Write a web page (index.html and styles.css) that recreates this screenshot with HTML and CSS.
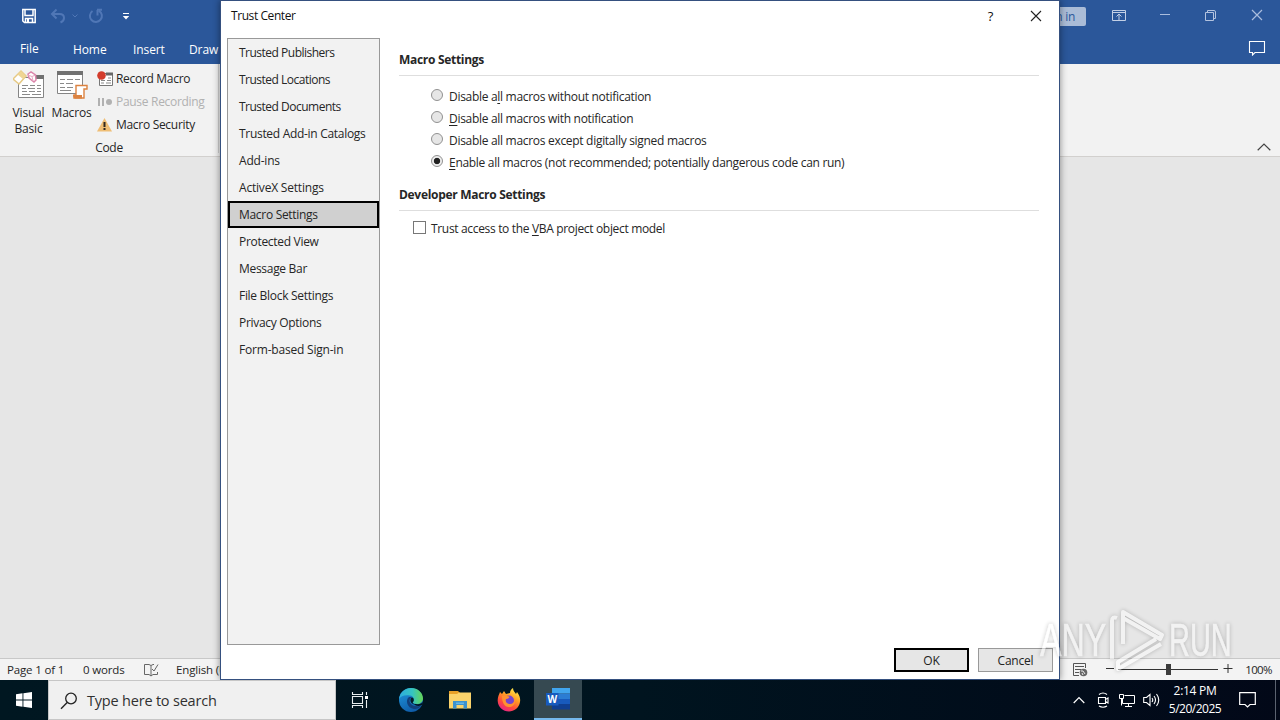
FILE: index.html
```html
<!DOCTYPE html>
<html lang="en">
<head>
    <meta charset="UTF-8">
    <meta name="viewport" content="width=device-width, initial-scale=1.0">
    <title>Trust Center</title>
    <link rel="stylesheet" href="styles.css">
</head>
<body>
    <div class="desktop">
        <div class="word">
            <header class="titlebar">
                <div class="quick-access">
                    <svg class="qa-save" width="16" height="16" viewBox="0 0 16 16"><path d="M1.8 1.5H14.2V14.5H3.5L1.8 13Z M4 2V7.5H12V2 M4.5 14V10.5H11.5V14" fill="none" stroke="#fff" stroke-width="1.5"/><path d="M6 11h2v3H6z" fill="#fff"/></svg>
                    <svg class="qa-undo" width="16" height="16" viewBox="0 0 16 16"><path d="M6.5 1.5L2 6L6.5 10.5 M2.5 6H9.5Q14 6 14 10Q14 13 10.5 14.5" fill="none" stroke="#5077b6" stroke-width="2"/></svg>
                    <svg class="qa-drop" width="6" height="4" viewBox="0 0 6 4"><path d="M.5 .5L3 3L5.5 .5" fill="none" stroke="#5077b6"/></svg>
                    <svg class="qa-redo" width="16" height="16" viewBox="0 0 16 16"><path d="M4.5 3A6 6 0 1 0 11 2.8 M9 1.8H14 M9.5 2V7.5" fill="none" stroke="#5077b6" stroke-width="2"/></svg>
                    <svg class="qa-more" width="8" height="7" viewBox="0 0 8 7"><path d="M1 .5H7" stroke="#fff"/><path d="M.8 3H7.2L4 6.5Z" fill="#fff"/></svg>
                </div>
                <div class="window-controls">
                    <span class="sign-in">Sign in</span>
                    <svg class="wc-ribbon" width="14" height="12" viewBox="0 0 14 12"><path d="M.5 .5H13.5V10.5H.5Z M.5 2.5H13.5 M7 10V4.5 M4.5 6.5L7 4L9.5 6.5" fill="none" stroke="#c3d0e6"/></svg>
                    <svg class="wc-min" width="10" height="10" viewBox="0 0 10 10"><path d="M0 3.5H10" stroke="#aabddd"/></svg>
                    <svg class="wc-max" width="11" height="11" viewBox="0 0 11 11"><path d="M.5 2.5H8.5V10.5H.5Z M2.5 2V.5H9Q10.5 .5 10.5 2V8.5H9" fill="none" stroke="#b3c3df"/></svg>
                    <svg class="wc-close" width="12" height="12" viewBox="0 0 12 12"><path d="M1 1L11 11M11 1L1 11" stroke="#aabddd" stroke-width="1.2"/></svg>
                </div>
            </header>
            <nav class="tabs">
                <span class="tab tab-file">File</span>
                <span class="tab tab-home">Home</span>
                <span class="tab tab-insert">Insert</span>
                <span class="tab tab-draw">Draw</span>
                <svg class="comment" width="18" height="16" viewBox="0 0 18 16"><path d="M1.5 1.5H16.5V12.5H7L4.5 15V12.5H1.5Z" fill="none" stroke="#fff" stroke-width="1.1"/></svg>
            </nav>
            <section class="ribbon">
                <div class="group">
                    <div class="group-tools">
                        <div class="tool tool-vb">
                            <svg width="32" height="32" viewBox="0 0 32 32">
                                <path d="M5.5 8.5H30.5V28.5H5.5Z" fill="#fff" stroke="#858585"/>
                                <path d="M20 6H31V10H20Z" fill="#717171"/>
                                <path d="M9 16.5H15M17 16.5H22M24 16.5H28M9 19.5H13M15 19.5H22M24 19.5H28M9 22.5H14M16 22.5H22M24 22.5H28M9 25.5H17M19 25.5H28" stroke="#8a8a8a"/>
                                <path d="M0 10L8 2L13 7L6 15Z" fill="#fff" stroke="#e6c983" stroke-width="1.5"/>
                                <path d="M8 2L13 7L10 10L4.5 5.5Z" fill="#efd594"/>
                                <path d="M15 5L18 3L22.5 6L23 11L21 13L16 9Z" fill="#fff" stroke="#dc85ab" stroke-width="1.5"/>
                                <path d="M15 6L19 7.5L22.5 6M19 7.5L20 12" stroke="#e8a8c3" fill="none"/>
                            </svg>
                            <span>Visual<br>Basic</span>
                        </div>
                        <div class="tool tool-macros">
                            <svg width="32" height="32" viewBox="0 0 32 32">
                                <path d="M1.5 2.5H26.5V24.5H1.5Z" fill="#fff" stroke="#858585"/>
                                <path d="M1 2H27V6H1Z" fill="#717171"/>
                                <path d="M4 10.5H9M11 10.5H17M19 10.5H24M4 14.5H8M10 14.5H17M4 18.5H9M11 18.5H17M4 21.5H15" stroke="#8a8a8a"/>
                                <path d="M20 16.5H31V20H28V29H18V26H20Z" fill="#fff" stroke="#dc8240" stroke-width="1.4"/>
                                <path d="M17 26H26V29.5H19Q17 29 17 26Z" fill="#dc8240"/>
                            </svg>
                            <span>Macros</span>
                        </div>
                        <div class="commands">
                            <div class="command">
                                <svg width="17" height="16" viewBox="0 0 17 16"><path d="M2.5 2.5H15.5V14.5H2.5Z" fill="#fff" stroke="#777"/><path d="M9 1.5H16V4.5H9Z" fill="#666"/><path d="M4 9.5H8M10 9.5H14M4 12H7M9 12H14M11 7H14" stroke="#888"/><circle cx="4.5" cy="4.5" r="4.3" fill="#d33c2c"/></svg>
                                <span>Record Macro</span>
                            </div>
                            <div class="command disabled">
                                <svg width="17" height="16" viewBox="0 0 17 16"><path d="M2 4V12M6 4V12" stroke="#b1b1b1" stroke-width="2"/><circle cx="12" cy="8" r="3" fill="#b1b1b1"/></svg>
                                <span>Pause Recording</span>
                            </div>
                            <div class="command">
                                <svg width="17" height="16" viewBox="0 0 17 16"><path d="M7.5 1L15 14.5H0Z" fill="#efbe75"/><path d="M7.5 5V10M7.5 11V13" stroke="#302820" stroke-width="2"/></svg>
                                <span>Macro Security</span>
                            </div>
                        </div>
                    </div>
                    <div class="group-name">Code</div>
                </div>
                <svg class="collapse" width="14" height="8" viewBox="0 0 14 8"><path d="M.7 7.2L7 1L13.3 7.2" fill="none" stroke="#444" stroke-width="1.2"/></svg>
            </section>
            <main class="canvas"></main>
            <footer class="statusbar">
                <span class="pages">Page 1 of 1</span>
                <span class="words">0 words</span>
                <svg class="proof" width="15" height="14" viewBox="0 0 15 14"><path d="M7 2.5L5 1.5H.5V11.5H5L7 13L9 11.5H13.5V9M7 2.5V13M7 2.5L9 1.5H10M8 6L10 8L14 1.5" fill="none" stroke="#666"/></svg>
                <span class="language">English (United States)</span>
                <div class="zoom">
                    <svg class="web-layout" width="15" height="14" viewBox="0 0 15 14"><path d="M12.5 5V.5H.5V12.5H6M2 3.5H11M2 6.5H8M2 9.5H6" fill="none" stroke="#555"/><circle cx="10.5" cy="9.5" r="3.8" fill="#666"/><path d="M8 8L10 8L12 11M10 12L9 10" stroke="#eee" fill="none"/></svg>
                    <svg class="slider" width="128" height="14" viewBox="0 0 128 14"><path d="M1 5.5H9M118.5 5.5H127.5M123 1V10M13 6.5H113" stroke="#333" fill="none"/><path d="M61 1H66V12H61Z" fill="#3c3c3c"/></svg>
                    <span class="percent">100%</span>
                </div>
            </footer>
        </div>

        <footer class="taskbar">
            <div class="start">
                <svg width="16" height="16" viewBox="0 0 16 16"><path d="M0 2.3L6.5 1.3V7.5H0ZM7.4 1.2L16 0V7.5H7.4ZM0 8.4H6.5V14.7L0 13.7ZM7.4 8.4H16V16L7.4 14.8Z" fill="#fff"/></svg>
            </div>
            <div class="search">
                <svg width="18" height="18" viewBox="0 0 18 18"><circle cx="11" cy="6.5" r="5.3" fill="none" stroke="#222" stroke-width="1.3"/><path d="M7.2 10.5L1 16.7" stroke="#222" stroke-width="1.4"/></svg>
                <span>Type here to search</span>
            </div>
            <div class="task">
                <svg width="18" height="18" viewBox="0 0 18 18"><path d="M1.5 1V3.5H11.5V1M1.5 17V14.5H11.5V17M1.5 5.5H11.5V12.5H1.5ZM15.5 1V4M15.5 9V17" fill="none" stroke="#e8eef0" stroke-width="1.1"/><path d="M14 5H17V8H14Z" fill="#fff"/></svg>
            </div>
            <div class="task task-edge">
                <svg width="24" height="24" viewBox="0 0 24 24">
                    <defs>
                        <linearGradient id="edgeTop" x1="0" x2="1"><stop offset="0" stop-color="#2dacdf"/><stop offset=".55" stop-color="#35c4c2"/><stop offset="1" stop-color="#66d654"/></linearGradient>
                        <linearGradient id="edgeBody" x1="0" y1="0" x2=".5" y2="1"><stop offset="0" stop-color="#2099df"/><stop offset="1" stop-color="#0f5da9"/></linearGradient>
                    </defs>
                    <circle cx="12" cy="12" r="12" fill="url(#edgeBody)"/>
                    <path d="M0 11C1 4 6 0 12 0C19 0 24 5 24 10.5C24 14 21 16 18 16C15 16 13.5 15 14 14C15.5 12 15 8 11 7.5C6 6.5 1.5 8 0 11Z" fill="url(#edgeTop)"/>
                    <path d="M10 9C6 12 8 20 15 21C18 21.5 21 19.5 22.5 17C20 19 14 18.5 12 16C10 13.5 10 11 13 9Z" fill="#123f7a"/>
                    <path d="M12 10C14 8 16 12 14 14C13 15.5 15 16 17 16C14 17.5 10 14 12 10Z" fill="#051a25"/>
                    <path d="M24 13.5C23 16 20 16.5 17 16L15 16C17 18.5 21 18.5 23.5 16.5Z" fill="#00141f"/>
                </svg>
            </div>
            <div class="task task-folder">
                <svg width="22" height="18" viewBox="0 0 22 18"><path d="M0 0H9L11 2H21V7H0Z" fill="#e7a129"/><path d="M0 3H8L10 1.5H22V17.5H0Z" fill="#fad36b"/><path d="M4 10H18V17.5H14.5V14H7.5V17.5H4Z" fill="#3c92cf"/><path d="M7 11.5H15V13H7Z" fill="#65b6e6"/></svg>
            </div>
            <div class="task task-firefox">
                <svg width="24" height="24" viewBox="0 0 24 24">
                    <defs><linearGradient id="fox" x1=".8" y1="0" x2=".25" y2="1"><stop offset="0" stop-color="#fff14f"/><stop offset=".4" stop-color="#ff9c24"/><stop offset=".7" stop-color="#ff4b3c"/><stop offset="1" stop-color="#e6208c"/></linearGradient></defs>
                    <path d="M3 4L5 6L7 3L9 6L13 5C13 3 14 1 16 0C16 3 18 4 19 6L20 4C23 8 23.5 11 23 14C22 20 17 23.5 12 23.5C6 23.5 1 19 .7 13C.5 9 2 7 3 4Z" fill="url(#fox)"/>
                    <circle cx="12" cy="12.5" r="5" fill="#7544cf"/>
                    <path d="M5 8C8 7 10 8 12 8.5C13 9 12 11 9 11C8 14 10 16 13 16C16 16 18 14 17 10C20 15 16 19 12 19C7 19 5 14 5 8Z" fill="#ff9130"/>
                </svg>
            </div>
            <div class="task task-word">
                <svg width="25" height="22" viewBox="0 0 25 22"><path d="M6 0H24V5.5H6Z" fill="#41a5ee"/><path d="M6 5.5H24V11H6Z" fill="#2b7cd3"/><path d="M6 11H24V16H6Z" fill="#185abd"/><path d="M6 16H24V21.5H6Z" fill="#103f91"/><path d="M0 5H12.5V17.5H0Z" fill="#185abd"/><text x="6.2" y="15" text-anchor="middle" class="word-letter">W</text></svg>
            </div>
            <div class="tray">
                <svg class="tray-up" width="12" height="8" viewBox="0 0 12 8"><path d="M.7 7L6 1.5L11.3 7" fill="none" stroke="#fff" stroke-width="1.2"/></svg>
                <svg class="tray-meet" width="12" height="16" viewBox="0 0 12 16"><path d="M1.5 5.5H8.5V11.5H1.5ZM8.5 7.5L11 6V11L8.5 9.5M2 2.5Q6 -.5 10 2.5M2 14Q6 16.5 10 14" fill="none" stroke="#fff" stroke-width="1.1"/></svg>
                <svg class="tray-net" width="16" height="14" viewBox="0 0 16 14"><path d="M5.5 2.5H15.5V10.5H3.5V6M.5 1.5H4.5V5.5H.5ZM2.5 5.5V12.5M9.5 10.5V13M6 13.5H13" fill="none" stroke="#fff"/></svg>
                <svg class="tray-sound" width="17" height="14" viewBox="0 0 17 14"><path d="M.7 4.5H3.5L7 1.5V12.5L3.5 9.5H.7ZM9 5Q10.5 7 9 9M11 3Q14 7 11 11M13.5 1Q18 7 13.5 13" fill="none" stroke="#fff" stroke-width="1.1"/></svg>
                <div class="clock"><span class="time">2:14 PM</span><span class="date">5/20/2025</span></div>
                <svg class="tray-note" width="17" height="16" viewBox="0 0 17 16"><path d="M.7 .7H16.3V12.5H11L8.5 15L6 12.5H.7Z" fill="none" stroke="#fff" stroke-width="1.2"/></svg>
                <span class="show-desktop"></span>
            </div>
        </footer>

        <div class="dialog">
            <div class="dialog-title">
                <span class="dialog-name">Trust Center</span>
                <span class="help">?</span>
                <svg class="close" width="12" height="12" viewBox="0 0 12 12"><path d="M1 1L11 11M11 1L1 11" stroke="#222" stroke-width="1.1"/></svg>
            </div>
            <div class="dialog-main">
                <ul class="sections">
                    <li class="tight">Trusted Publishers</li>
                    <li class="tight">Trusted Locations</li>
                    <li class="tight">Trusted Documents</li>
                    <li>Trusted Add-in Catalogs</li>
                    <li class="loose">Add-ins</li>
                    <li class="loose">ActiveX Settings</li>
                    <li class="selected">Macro Settings</li>
                    <li>Protected View</li>
                    <li>Message Bar</li>
                    <li>File Block Settings</li>
                    <li>Privacy Options</li>
                    <li class="loose">Form-based Sign-in</li>
                </ul>
                <div class="settings">
                    <h2>Macro Settings</h2>
                    <div class="options">
                        <label class="option"><i class="radio"></i><span>Disable a<u>l</u>l macros without notification</span></label>
                        <label class="option"><i class="radio"></i><span><u>D</u>isable all macros with notification</span></label>
                        <label class="option"><i class="radio"></i><span>Disable all macros except di<u>g</u>itally signed macros</span></label>
                        <label class="option"><i class="radio checked"></i><span><u>E</u>nable all macros (not recommended; potentially dangerous code can run)</span></label>
                    </div>
                    <h2>Developer Macro Settings</h2>
                    <label class="trust"><i class="checkbox"></i><span>Trust access to the <u>V</u>BA project object model</span></label>
                </div>
            </div>
            <div class="buttons">
                <button class="ok">OK</button>
                <button class="cancel">Cancel</button>
            </div>
        </div>

        <svg class="watermark" width="210" height="76" viewBox="0 0 210 76">
            <text transform="translate(4 54) scale(.7 1)">ANY</text>
            <text transform="translate(133 54) scale(.63 1)">RUN</text>
            <path d="M76 57V19Q76 14 81 16M87 42V10L126 33L124 37L87 16M125 42L82 67V60L120 37"/>
        </svg>
    </div>
</body>
</html>
```
FILE: styles.css
```css
* {
    box-sizing: border-box;
}

body {
    margin: 0;
    font-family: "Open Sans", "Noto Sans", sans-serif;
    font-size: 12px;
    line-height: 16px;
    letter-spacing: -0.3px;
    color: #262626;
    overflow: hidden;
}

svg {
    display: block;
    flex: none;
}

span {
    white-space: nowrap;
}

.desktop {
    position: relative;
    width: 1280px;
    height: 720px;
    overflow: hidden;
}

/* Word window */
.word {
    display: flex;
    flex-direction: column;
    height: 680px;
}

.titlebar {
    display: flex;
    justify-content: space-between;
    height: 32px;
    background: #2b579a;
}

.quick-access {
    display: flex;
    align-items: center;
    padding-left: 21px;
}

.qa-undo { margin-left: 13px; }
.qa-drop { margin-left: 6px; }
.qa-redo { margin-left: 10px; }
.qa-more { margin-left: 18px; }

.window-controls {
    display: flex;
    align-items: center;
    padding-right: 17px;
}

.sign-in {
    width: 60px;
    height: 19px;
    padding-right: 11px;
    line-height: 20px;
    text-align: right;
    border-radius: 2px;
    background: #aabcd7;
    color: #2b579a;
}

.wc-ribbon { margin-left: 26px; }
.wc-min { margin-left: 34px; }

.wc-max {
    margin-left: 35px;
    margin-top: -2px;
}

.wc-close {
    margin-left: 35px;
    margin-top: -2px;
}

.tabs {
    display: flex;
    align-items: center;
    height: 32px;
    padding: 3px 14px 0 20px;
    background: #2b579a;
    color: #fff;
    letter-spacing: -0.1px;
}

.tab-file { width: 53px; margin-top: -2px; }
.tab-home { width: 60px; }
.tab-insert { width: 56px; }

.comment {
    margin-left: auto;
    margin-top: -3px;
}

.ribbon {
    display: flex;
    justify-content: space-between;
    height: 93px;
    border-bottom: 1px solid #d2d0ce;
    background: #f2f2f2;
}

.group {
    width: 219px;
    margin-bottom: 3px;
    border-right: 1px solid #d0d0d0;
}

.group-tools {
    display: flex;
    height: 76px;
    padding: 5px 0 0 7px;
}

.tool {
    display: flex;
    flex-direction: column;
    align-items: center;
    gap: 4px;
    width: 43px;
    text-align: center;
    letter-spacing: -0.2px;
}

.commands {
    padding-left: 4px;
}

.command {
    display: flex;
    align-items: center;
    gap: 2px;
    height: 19px;
    margin-bottom: 4px;
}

.disabled {
    color: #b1b1b1;
}

.group-name {
    text-align: center;
    letter-spacing: -0.3px;
}

.collapse {
    margin: 79px 9px 0 0;
}

.canvas {
    flex: 1;
    background: #e6e6e6;
}

.statusbar {
    display: flex;
    align-items: center;
    height: 22px;
    padding-left: 7px;
    border-top: 1px solid #c8c8c8;
    background: #f3f3f3;
    font-size: 11.5px;
    letter-spacing: -0.15px;
}

.pages { width: 76px; }
.words { width: 61px; }
.language { margin-left: 17px; }

.zoom {
    display: flex;
    align-items: center;
    margin-left: auto;
    padding-right: 8px;
}

.slider { margin-left: 17px; }

.percent {
    margin-left: 12px;
    letter-spacing: -0.6px;
}

/* Taskbar */
.taskbar {
    display: flex;
    height: 40px;
    background: linear-gradient(90deg, #001721, #00141f 50%, #020818);
    color: #fff;
}

.start,
.task {
    display: flex;
    align-items: center;
    justify-content: center;
    width: 48px;
}

.search {
    display: flex;
    align-items: center;
    gap: 9px;
    width: 288px;
    padding: 1px 0 0 11px;
    border: 1px solid #c6c6c6;
    background: #f0f0f0;
    color: #303030;
    font-size: 14.5px;
    letter-spacing: -0.2px;
}

.task-edge { width: 54px; }
.task-folder { width: 44px; }

.task-firefox {
    width: 52px;
    padding-left: 2px;
}

.task-word {
    border-bottom: 2px solid #76b9ed;
    background: #364951;
}

.word-letter {
    font: bold 10px "Open Sans", sans-serif;
    fill: #fff;
}

.tray {
    display: flex;
    align-items: center;
    margin-left: auto;
    padding-right: 4px;
}

.tray-meet { margin-left: 12px; }
.tray-net { margin-left: 10px; }
.tray-sound { margin-left: 8px; }

.clock {
    display: flex;
    flex-direction: column;
    align-items: center;
    width: 72px;
    padding-right: 2px;
    line-height: 18px;
    letter-spacing: -0.3px;
}

.date {
    letter-spacing: -0.5px;
}

.tray-note { margin-left: 7px; }

.show-desktop {
    width: 1px;
    height: 40px;
    margin-left: 19px;
    background: #5b6270;
}

/* Trust Center dialog */
.dialog {
    position: absolute;
    left: 220px;
    top: 0;
    display: flex;
    flex-direction: column;
    width: 840px;
    height: 680px;
    border: 1px solid #35507f;
    background: #fff;
    box-shadow: 0 0 7px rgba(0, 0, 0, 0.45);
    clip-path: inset(0 -10px 0 -10px);
}

.dialog-title {
    display: flex;
    align-items: center;
    height: 30px;
    padding: 0 17px 0 10px;
    color: #111;
}

.dialog-name {
    letter-spacing: -0.42px;
}

.help {
    margin-left: auto;
    margin-right: 37px;
    font-size: 13px;
}

.dialog-main {
    display: flex;
    height: 614px;
    padding: 7px 20px 0 6px;
}

.sections {
    width: 153px;
    height: 607px;
    margin: 0;
    padding: 0;
    border: 1px solid #999;
    background: #f2f2f2;
    list-style: none;
}

.sections li {
    height: 27px;
    padding-left: 11px;
    line-height: 28px;
    white-space: nowrap;
}

.sections .selected {
    padding-left: 9px;
    border: 2px solid #000;
    background: #d0d0d0;
    line-height: 24px;
}

.sections .tight {
    letter-spacing: -0.5px;
}

.sections .loose {
    letter-spacing: -0.2px;
}

.settings {
    flex: 1;
    padding-left: 19px;
}

.settings h2 {
    height: 38px;
    margin: 0;
    padding-top: 14px;
    border-bottom: 1px solid #dedede;
    font-size: 12px;
    line-height: 16px;
}

.options {
    height: 97px;
    padding: 10px 0 0 32px;
}

.option {
    display: flex;
    height: 22px;
    line-height: 22px;
}

.radio {
    width: 12px;
    height: 12px;
    margin: 3px 6px 0 0;
    border: 1px solid #919191;
    border-radius: 50%;
    background: #e6e6e6;
}

.checked {
    background: radial-gradient(circle, #222 0 2.8px, #eee 3.6px);
}

.trust {
    display: flex;
    padding: 10px 0 0 14px;
    letter-spacing: -0.33px;
}

.checkbox {
    width: 13px;
    height: 13px;
    margin-right: 5px;
    border: 1px solid #777;
    background: #fff;
}

u {
    text-underline-offset: 2px;
}

.buttons {
    display: flex;
    justify-content: flex-end;
    gap: 9px;
    padding: 3px 6px 0 0;
}

.buttons button {
    width: 75px;
    height: 24px;
    padding: 1px 0 0;
    border: 1px solid #999;
    background: #e6e6e6;
    color: #222;
    font: inherit;
    letter-spacing: -0.2px;
}

.buttons .ok {
    border: 2px solid #000;
}

.watermark {
    position: absolute;
    left: 1036px;
    top: 602px;
    opacity: 0.5;
    filter: drop-shadow(0 0 2px rgba(0, 0, 0, 0.45));
}

.watermark text {
    font: 46px "Liberation Sans", sans-serif;
    letter-spacing: 0;
    fill: #fff;
    stroke: #fff;
    stroke-width: 0.6;
}

.watermark path {
    fill: none;
    stroke: #fff;
    stroke-width: 4;
    stroke-linejoin: round;
}
```
